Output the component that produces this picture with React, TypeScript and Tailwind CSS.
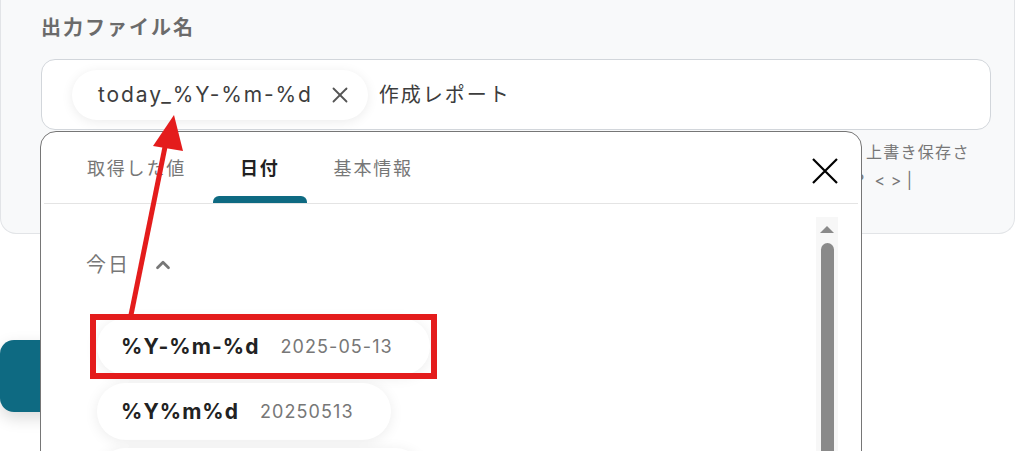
import * as React from "react";
import { X, ChevronUp } from "lucide-react";

type DateFormat = {
  format: string;
  sample: string;
  highlighted?: boolean;
};

const formats: DateFormat[] = [
  { format: "%Y-%m-%d", sample: "2025-05-13", highlighted: true },
  { format: "%Y%m%d", sample: "20250513" },
  { format: "%Y/%m/%d", sample: "2025/05/13" },
];

const tabs = ["取得した値", "日付", "基本情報"];

function FormatItem({ item }: { item: DateFormat }) {
  return (
    <li className="relative w-fit">
      <div className="flex h-[57px] items-center gap-[21px] rounded-full bg-white pl-6 pr-[37px] shadow-[0_2px_14px_rgba(0,0,0,0.08)]">
        <span className="text-[21px] font-bold tracking-[0.05em] text-[#222]">{item.format}</span>
        <span className="text-[18px] tracking-[0.06em] text-[#777]">{item.sample}</span>
      </div>
      {item.highlighted && (
        <div className="pointer-events-none absolute -top-1 -bottom-1 -left-[7px] -right-[7px] border-[6px] border-[#e41c1c]" />
      )}
    </li>
  );
}

function VariablePicker() {
  const [active, setActive] = React.useState(1);
  return (
    <div className="absolute left-10 top-[131px] h-[360px] w-[822px] overflow-hidden rounded-t-[16px] border border-[#767676] bg-white">
      <div className="relative mx-[3px] flex h-[72px] items-stretch border-b border-[#e4e4e4] px-4">
        {tabs.map((t, i) => (
          <button
            key={t}
            onClick={() => setActive(i)}
            className={`relative flex items-center px-[27px] pt-[1px] text-[18px] tracking-[0.1em] ${
              active === i ? "font-bold text-[#222]" : "text-[#777]"
            }`}
          >
            {t}
            {active === i && (
              <span className="absolute bottom-0 left-0 right-0 h-[7px] rounded-t-[6px] bg-[#0e6a82]" />
            )}
          </button>
        ))}
        <button className="ml-auto mr-[4px] mt-[26px] self-start text-black">
          <svg width="26" height="26" viewBox="0 0 26 26" fill="none" stroke="currentColor" strokeWidth="2.2">
            <path d="M1 1 L25 25 M25 1 L1 25" />
          </svg>
        </button>
      </div>
      <div className="flex">
        <div className="flex-1 pl-[45px] pt-[46px]">
          <div className="flex items-center gap-[22px] text-[20px] tracking-[0.1em] text-[#777]">
            今日
            <ChevronUp className="h-[22px] w-[22px]" strokeWidth={3} />
          </div>
          <ul className="ml-[11px] mt-[38px] flex flex-col gap-2">
            {formats.map((f) => (
              <FormatItem key={f.format} item={f} />
            ))}
          </ul>
        </div>
        <div className="mr-[23px] mt-[13px] flex w-[22px] flex-col items-center bg-[#f7f7f7]">
          <div className="mt-[9px] h-0 w-0 border-x-[7px] border-b-[7px] border-x-transparent border-b-[#8a8a8a]" />
          <div className="mt-[10px] h-[260px] w-[13px] rounded-t-full bg-[#8a8a8a]" />
        </div>
      </div>
    </div>
  );
}

function Arrow() {
  return (
    <svg className="pointer-events-none absolute left-0 top-0" width="1023" height="451">
      <line x1="131" y1="315" x2="166" y2="142" stroke="#e41c1c" strokeWidth="5" />
      <polygon points="174,115 153,146 183,151" fill="#e41c1c" />
    </svg>
  );
}

export default function App() {
  return (
    <div className="relative h-[451px] w-[1023px] overflow-hidden bg-white font-[Inter,'Noto_Sans_CJK_JP',sans-serif]">
      <section className="w-[1015px] rounded-b-[16px] border border-t-0 border-[#e2e4e7] bg-[#f8f9fa] pl-10 pt-[13px]">
        <h2 className="text-[20px] font-semibold leading-[30px] tracking-[0.1em] text-[#6b6b6b]">出力ファイル名</h2>
        <div className="mt-[16px] flex h-[71px] w-[950px] items-center gap-[11px] rounded-[14px] border border-[#d2d6db] bg-white pl-[30px]">
          <div className="flex h-[50px] items-center gap-[14px] rounded-full bg-white pl-[26px] pr-[15px] shadow-[0_2px_12px_rgba(0,0,0,0.08)]">
            <span className="text-[21px] tracking-[0.09em] text-[#3d3d3d]">today_%Y-%m-%d</span>
            <X className="h-[26px] w-[26px] text-[#555]" strokeWidth={1.7} />
          </div>
          <span className="text-[20px] tracking-[0.1em] text-[#3d3d3d]">作成レポート</span>
        </div>
        <div className="flex justify-end pb-[39px] pr-[14px] pt-[8px]">
          <p className="w-[150px] text-[16px] leading-[28px] text-[#777]">
            <span className="pl-[16px] tracking-[0.08em]">上書き保存さ</span>
            <br />
            <span className="pl-[6px] tracking-[0.03em]">?&nbsp;&nbsp;&lt; &gt; |</span>
          </p>
        </div>
      </section>
      <div className="mt-[106px] h-[72px] w-[180px] rounded-[14px] bg-[#0e6a82] shadow-[0_6px_16px_rgba(0,0,0,0.15)]" />
      <VariablePicker />
      <Arrow />
    </div>
  );
}
